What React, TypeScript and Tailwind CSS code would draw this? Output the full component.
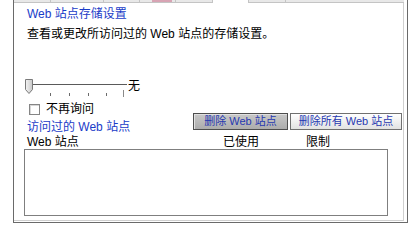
const font = "font-['Liberation_Sans','Noto_Sans_CJK_SC',sans-serif]";

function Slider() {
  return (
    <div className="flex items-start ml-[-3px]">
      <svg width="104" height="20" viewBox="0 0 104 20">
        {/* track */}
        <line x1="9" y1="6.5" x2="103" y2="6.5" stroke="#5a5a5a" strokeWidth="1" />
        {/* ticks */}
        {[26, 45, 64, 82].map((x) => (
          <line key={x} x1={x + 0.5} y1="15" x2={x + 0.5} y2="18" stroke="#6a6a6a" strokeWidth="1" />
        ))}
        <line x1="99.5" y1="12" x2="99.5" y2="19" stroke="#8a8a8a" strokeWidth="1" />
        {/* thumb */}
        <defs>
          <linearGradient id="thumb" x1="0" y1="0" x2="1" y2="0">
            <stop offset="0" stopColor="#f4f4f4" />
            <stop offset="1" stopColor="#c8c8c8" />
          </linearGradient>
        </defs>
        <path d="M1.5 1.5 H8.5 V11.5 L5 15.5 L1.5 11.5 Z" fill="url(#thumb)" stroke="#7a7a7a" strokeWidth="1" />
      </svg>
      <span className="text-[12px] leading-[14px] mt-[1px] text-black">无</span>
    </div>
  );
}

export default function App() {
  return (
    <div className={`w-[415px] h-[228px] bg-white overflow-hidden pl-[13px] ${font}`}>
      <div className="w-[395px] h-[223px] border-l border-r border-b border-[#6a6a6a] flex flex-col">
        {/* tab strip (bottoms of the tabs) */}
        <div className="flex h-[3px] w-[390px]">
          <div className="w-[36px] bg-[#e8e8e8] border-b border-[#c4c4c4]" />
          <div className="w-[53px] bg-[#e8e8e8] border-l border-b border-[#c4c4c4]" />
          <div className="w-[36px] bg-[#e8e8e8] border-l border-b border-[#c4c4c4]" />
          <div className="w-[36px] bg-[#e8e8e8] border-l border-b border-[#c4c4c4] flex justify-end pr-[3px]">
            <div className="w-[20px] h-[2px] bg-[#d8a4b4]" />
          </div>
          <div className="w-[37px] bg-[#e8e8e8] border-l border-b border-[#c4c4c4]" />
          <div className="w-[36px] bg-white border-l border-[#c4c4c4]" />
          <div className="w-[37px] bg-[#e8e8e8] border-l border-b border-[#c4c4c4]" />
          <div className="flex-1 bg-[#e8e8e8] border-l border-b border-[#c4c4c4]" />
        </div>

        {/* settings panel */}
        <div className="w-[390px] flex-1 mb-[1px] border-r border-b border-[#d0d0d0] bg-white pl-[13px] pr-[1px] text-[12px] text-black">
          <p className="mt-[3px] leading-[16px] text-[#1a3cc8]">Web 站点存储设置</p>
          <p className="mt-[4px] leading-[16px]">查看或更改所访问过的 Web 站点的存储设置。</p>

          <div className="mt-[36px]">
            <Slider />
          </div>

          <div className="flex mt-[3px]">
            <div className="flex-1">
              <div className="flex items-center h-[16px]">
                <span className="ml-[2px] w-[11px] h-[11px] border border-[#858585] bg-white shadow-[inset_1px_1px_0_#d8d8d8]" />
                <span className="ml-[6px] leading-[16px]">不再询问</span>
              </div>
              <p className="mt-[3px] leading-[15px] text-[#1a3cc8]">访问过的 Web 站点</p>
            </div>
            <div className="flex gap-[2px] mt-[12px] self-start">
              <button className="w-[95px] h-[17px] border border-[#4e4e4e] bg-gradient-to-b from-[#c8c8c8] to-[#acacac] shadow-[inset_1px_1px_0_#e0e0e0] text-[11px] leading-[15px] text-[#2638b0]">
                删除 Web 站点
              </button>
              <button className="w-[112px] h-[17px] border border-[#707070] bg-gradient-to-b from-white to-[#e2e2e2] text-[11px] leading-[15px] text-[#2638b0]">
                删除所有 Web 站点
              </button>
            </div>
          </div>

          <div className="flex leading-[14px]">
            <span className="w-[196px]">Web 站点</span>
            <span className="w-[83px]">已使用</span>
            <span>限制</span>
          </div>
          <div className="ml-[-3px] w-[364px] h-[67px] border border-[#7f7f7f] bg-white" />
        </div>
      </div>
    </div>
  );
}
